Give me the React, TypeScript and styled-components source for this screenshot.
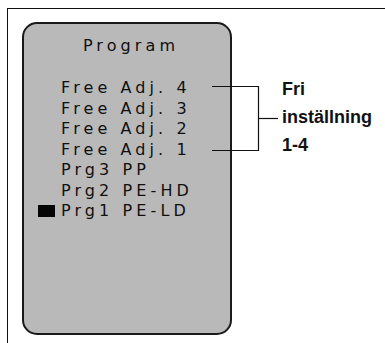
import styled, { createGlobalStyle } from "styled-components";

const GlobalStyle = createGlobalStyle`
  html, body {
    margin: 0;
    padding: 0;
    background: #ffffff;
  }
`;

const Frame = styled.div`
  margin: 8px 0 0 7px;
  min-height: calc(100vh - 8px);
  box-sizing: border-box;
  border-top: 1px solid #111;
  border-left: 1px solid #111;
  padding: 13px 0 0 14px;
  display: flex;
  align-items: flex-start;
`;

const Display = styled.div`
  width: 210px;
  height: 313px;
  box-sizing: border-box;
  flex-shrink: 0;
  background: #b9b9b9;
  border: 2px solid #1a1a1a;
  border-radius: 15px;
  padding: 12px 0 0 14px;
  font-family: "DejaVu Sans", Verdana, sans-serif;
  font-size: 16px;
  line-height: 20.5px;
  letter-spacing: 4.1px;
  color: #101010;
`;

const Title = styled.div`
  text-align: center;
  margin-left: -10px;
  padding-left: 4px;
  margin-bottom: 21.5px;
`;

const List = styled.div`
  display: flex;
  flex-direction: column;
`;

const Row = styled.div`
  display: flex;
  align-items: center;
  gap: 6px;
  white-space: pre;
`;

const Cursor = styled.span<{ $on: boolean }>`
  width: 17px;
  height: 12px;
  flex-shrink: 0;
  background: ${(p) => (p.$on ? "#050505" : "transparent")};
`;

const Annotation = styled.div`
  display: flex;
  align-items: flex-start;
  margin: 53px 0 0 -20px;
`;

const Bracket = styled.svg`
  margin-top: 11px;
  flex-shrink: 0;
`;

const Note = styled.div`
  margin-left: 4px;
  font-family: "Liberation Sans", Arial, sans-serif;
  font-weight: bold;
  font-size: 18px;
  line-height: 28px;
  color: #111;
`;

const programs = [
  { name: "Free Adj. 4" },
  { name: "Free Adj. 3" },
  { name: "Free Adj. 2" },
  { name: "Free Adj. 1" },
  { name: "Prg3 PP" },
  { name: "Prg2 PE-HD" },
  { name: "Prg1 PE-LD", active: true },
];

export default function App() {
  return (
    <>
      <GlobalStyle />
      <Frame>
        <Display>
          <Title>Program</Title>
          <List>
            {programs.map((p) => (
              <Row key={p.name}>
                <Cursor $on={!!p.active} />
                {p.name}
              </Row>
            ))}
          </List>
        </Display>
        <Annotation>
          <Bracket width="66" height="66" viewBox="0 0 66 66">
            <g stroke="#111" strokeWidth="1.2" fill="none">
              <path d="M0 0.5H46.5V64.5H0" />
              <path d="M46.5 32.5H66" />
            </g>
          </Bracket>
          <Note>
            Fri
            <br />
            inställning
            <br />
            1-4
          </Note>
        </Annotation>
      </Frame>
    </>
  );
}
